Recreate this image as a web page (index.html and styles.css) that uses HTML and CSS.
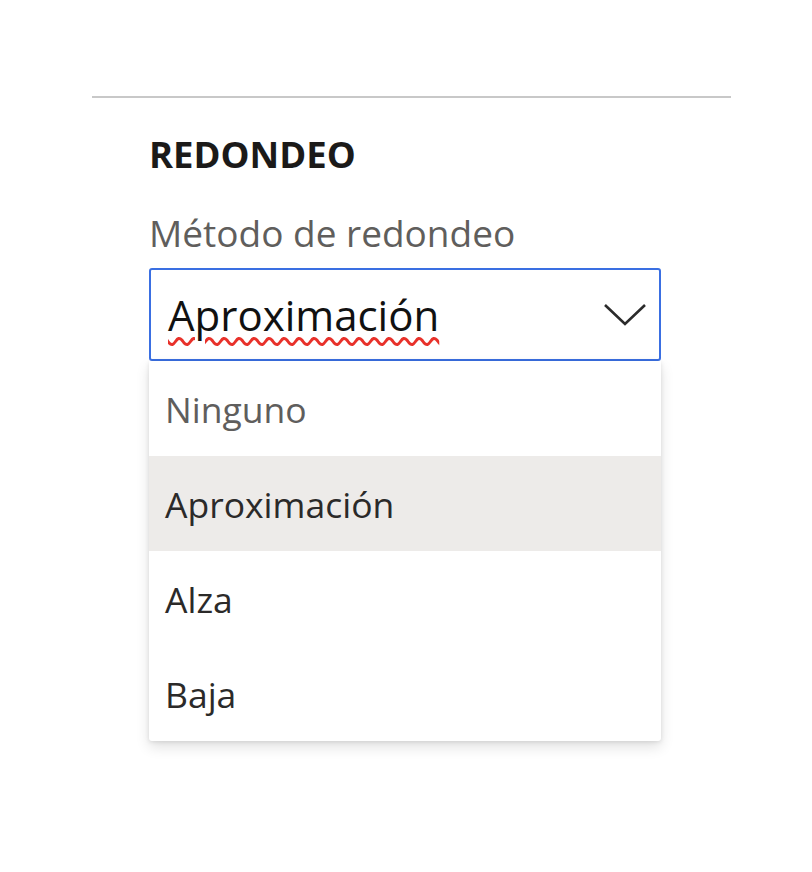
FILE: index.html
```html
<!DOCTYPE html>
<html lang="es">
<head>
    <meta charset="UTF-8">
    <meta name="viewport" content="width=device-width, initial-scale=1.0">
    <title>Redondeo</title>
    <link rel="stylesheet" href="styles.css">
</head>
<body>
    <div class="panel">
        <div class="rule"></div>
        <div class="section">
            <h2 class="heading">REDONDEO</h2>
            <label class="field-label">Método de redondeo</label>
            <div class="dropdown">
                <span class="dropdown-value">Aproximación</span>
                <svg class="chevron" width="44" height="24" viewBox="0 0 44 24">
                    <polyline points="2,2 22,21 42,2" fill="none" stroke="#2b2b2b" stroke-width="2.6"/>
                </svg>
            </div>
            <ul class="options">
                <li class="option option-muted">Ninguno</li>
                <li class="option selected">Aproximación</li>
                <li class="option">Alza</li>
                <li class="option">Baja</li>
            </ul>
        </div>
    </div>
</body>
</html>
```

FILE: styles.css
```css
body {
    margin: 0;
    background-color: #fff;
    font-family: "Open Sans", "Noto Sans", sans-serif;
    color: #323130;
}

.panel {
    width: 639px;
    padding: 96px 0 80px 92px;
}

.rule {
    height: 2px;
    background-color: #c8c8c8;
}

.section {
    padding-left: 57px;
}

.heading {
    margin: 34px 0 0;
    font-size: 36.5px;
    line-height: 44px;
    font-weight: 700;
    color: #1b1a19;
}

.field-label {
    display: block;
    margin-top: 32px;
    font-size: 37px;
    line-height: 50px;
    color: #605e5c;
}

.dropdown {
    box-sizing: border-box;
    width: 512px;
    height: 93px;
    margin-top: 10px;
    border: 2px solid #3a6fe2;
    border-radius: 3px;
    display: flex;
    align-items: center;
    justify-content: space-between;
    padding: 0 12px 0 17px;
}

.dropdown-value {
    font-size: 42px;
    color: #111;
    text-decoration: underline wavy #e8312a;
    text-decoration-thickness: 2.5px;
    text-underline-offset: 6px;
}

.chevron {
    display: block;
}

.options {
    list-style: none;
    margin: 0;
    padding: 0;
    width: 512px;
    background-color: #fff;
    border-radius: 0 0 3px 3px;
    box-shadow: 0 6px 14px rgba(0, 0, 0, 0.12), 0 1px 4px rgba(0, 0, 0, 0.1);
}

.option {
    height: 95px;
    line-height: 97px;
    padding-left: 16px;
    font-size: 35.5px;
    color: #2b2a29;
}

.option-muted {
    color: #5f5e5d;
}

.option.selected {
    background-color: #edebe9;
}
```
